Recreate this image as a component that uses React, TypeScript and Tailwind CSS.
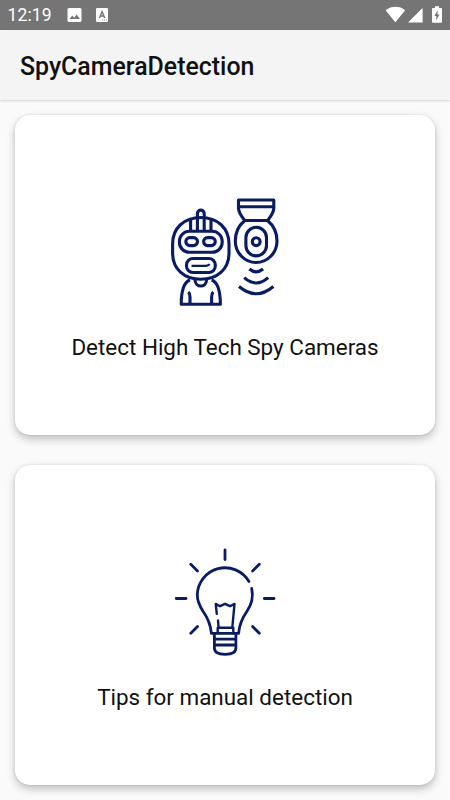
import type { ReactNode } from "react";

function StatusBar() {
  return (
    <div className="flex h-[30px] items-center justify-between bg-[#757575] pr-[7px] pl-[7.5px] text-white">
      <div className="flex items-center">
        <span className="w-[45px] text-[17.5px] leading-[31px] font-normal tracking-[0.15px]">12:19</span>
        <svg className="ml-[14.5px]" width="15" height="14" viewBox="0 0 15 14">
          <rect x="0.5" width="14" height="14" rx="1.5" fill="#fff" />
          <path d="M2.5 11 5.3 7.5l1.9 2.2L9.7 6.5l3.3 4.5Z" fill="#757575" />
        </svg>
        <svg className="ml-[14px]" width="12" height="14" viewBox="0 0 12 14">
          <rect width="12" height="14" rx="1.2" fill="#fff" />
          <path d="m3.4 10 2.7-6.4L8.8 10M4.3 8h3.6" fill="none" stroke="#757575" strokeWidth="1.4" />
          <path d="M6 12h5" stroke="#999" strokeWidth="1" strokeDasharray="1 1" />
        </svg>
      </div>
      <svg width="58" height="18" viewBox="385 6 58 18" fill="#fff">
        <path d="M395.3 22.3 385.6 10.2c5.8-4.6 13.8-4.6 19.6 0Z" />
        <path d="M408 22.5h14.6V8Z" />
        <path d="M435 6.3h4v1.6h2.2q.8 0 .8.8v13q0 1-1 1h-8q-1 0-1-1v-13q0-.8.8-.8h2.2Z" />
        <path d="M437.8 10.2 434.3 16h2.1l-.4 4.5 3.6-6h-2.2Z" fill="#757575" />
      </svg>
    </div>
  );
}

function SpyIcon() {
  return (
    <svg
      width="120"
      height="115"
      viewBox="165 195 120 115"
      fill="none"
      stroke="#091b66"
      strokeWidth="3.1"
      strokeLinejoin="round"
    >
      {/* head */}
      <path d="M172.6 244c0-16 11.5-26.5 28.2-26.5S229 228 229 244v9c0 16-11.5 26.3-28.2 26.3S172.6 269 172.6 253Z" />
      <path d="M197.4 231v-17.5a3.4 3.4 0 0 1 6.8 0V231M190.6 219.5V231M211 219.500V231" />
      <rect x="179.4" y="231.3" width="42.8" height="21" rx="10" />
      <rect x="185.8" y="237.6" width="11.7" height="8" rx="4" />
      <rect x="203.6" y="237.6" width="11.7" height="8" rx="4" />
      <rect x="186.5" y="258.5" width="28.8" height="14" rx="6.5" />
      <path d="M191.5 265.8H206q2.5 0 3.7-1.6" strokeWidth="2.2" />
      {/* body */}
      <path d="M190 280c-6 2-8.7 10-8.8 24.3h39.2c-.1-14.3-2.8-22.3-8.8-24.3" />
      <path d="M195 280c.5 8 11.1 8 11.6 0M188.3 292q1.7 1.5 1.7 5v7M213.3 292q-1.7 1.5-1.7 5v7" />
      {/* camera */}
      <path d="M238.5 200h35.3v8c0 5-3 8.500-6.300 12.500h-22.700c-3.300-4-6.300-7.500-6.300-12.500ZM238.500 206.800h35.300" />
      <path d="M244.800 220.500c-5.500 4.500-9.500 12-9.500 20.500 0 12 9.500 21.500 20.800 21.500s20.900-9.500 20.900-21.500c0-8.500-4-16-9.500-20.500" />
      <rect x="245.9" y="227.3" width="20.6" height="28.6" rx="10.3" />
      <circle cx="256.2" cy="241.7" r="3.9" />
      <path d="M249.3 269q6.9 5.6 13.8 0M244.2 277.7q12 10.6 24 0M239 286.500q17.200 14.500 34.400 0" />
    </svg>
  );
}

function BulbIcon() {
  return (
    <svg
      width="120"
      height="115"
      viewBox="165 545 120 115"
      fill="none"
      stroke="#091b66"
      strokeWidth="2.8"
      strokeLinecap="round"
      strokeLinejoin="round"
    >
      <path
        d="M225 550v9.5M176.2 598.5H186M264.3 598.5H274M190.8 564.3l6.7 6.7M259.3 564.3l-6.7 6.7M190.8 633.2l6.7-6.7M259.3 633.2l-6.7-6.7"
      />
      {/* glass */}
      <path d="M248.9 581.5A27.7 27.7 0 0 0 197.3 595c0 6 2.3 11 5.7 16.2 5 7 7.7 13.3 8.4 22.2h27.2c.7-8.9 3.4-15.2 8.4-22.2 4.4-6.2 6.5-14.2 4.7-22.8" />
      {/* filament */}
      <path
        d="M216.8 613.8l-1.1-9.9 4.3 2.3 5-2.3 5 2.3 4.5-2.3-2.2 23.7M218 620.5l.6 7M217.7 633v-5.3h15.6v5.3"
        strokeWidth="2.4"
      />
      {/* screw base */}
      <path d="M214.4 633.5V648c0 4.5 4.5 6.3 10.7 6.3s10.8-1.8 10.8-6.3v-14.5M214.4 639.2h21.5M214.4 645h21.5" />
    </svg>
  );
}

function MenuCard({ icon, label }: { icon: ReactNode; label: string }) {
  return (
    <button className="flex h-[320px] w-full flex-col items-center rounded-[15px] bg-white pt-20 shadow-[0_4px_9px_rgba(0,0,0,0.24),0_0_3px_rgba(0,0,0,0.1)]">
      {icon}
      <span className="mt-[22px] text-[22.45px] leading-[30px] whitespace-nowrap text-[#111]">{label}</span>
    </button>
  );
}

export default function App() {
  return (
    <div className="h-[800px] w-full overflow-hidden bg-[#fafafa] font-['Roboto','Liberation_Sans',sans-serif]">
      <StatusBar />
      <header className="flex h-[70px] items-center bg-[#f4f4f4] pl-5 shadow-[0_1px_2px_rgba(0,0,0,0.16)]">
        <h1 className="pt-[3px] text-[24.9px] font-medium whitespace-nowrap text-[#111]">SpyCameraDetection</h1>
      </header>
      <main className="flex flex-col gap-[30px] px-[15px] pt-[15px]">
        <MenuCard icon={<SpyIcon />} label="Detect High Tech Spy Cameras" />
        <MenuCard icon={<BulbIcon />} label="Tips for manual detection" />
      </main>
    </div>
  );
}
